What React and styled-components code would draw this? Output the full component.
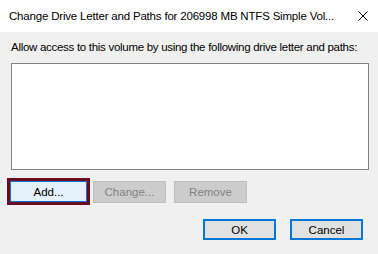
import React from 'react';
import styled, { createGlobalStyle } from 'styled-components';

const GlobalStyle = createGlobalStyle`
  html, body {
    margin: 0;
    padding: 0;
    background: #f0f0f0;
  }
  * {
    box-sizing: border-box;
  }
`;

const Window = styled.div`
  width: 378px;
  height: 254px;
  display: flex;
  flex-direction: column;
  background: #f0f0f0;
  font-family: 'Liberation Sans', Arial, sans-serif;
  font-size: 11.5px;
  color: #000;
  overflow: hidden;
`;

const TitleBar = styled.div`
  height: 32px;
  flex: none;
  display: flex;
  align-items: center;
  justify-content: space-between;
  padding: 0 10px 0 9px;
  background: #fff;
`;

const Title = styled.div`
  font-size: 11.5px;
  white-space: nowrap;
  letter-spacing: -0.19px;
`;

const CloseIcon = styled.svg`
  width: 10px;
  height: 10px;
  flex: none;
`;

const Body = styled.div`
  display: flex;
  flex-direction: column;
  padding: 0 9px 0 11px;
`;

const Label = styled.div`
  margin-top: 8px;
  line-height: 15px;
  white-space: nowrap;
  letter-spacing: -0.29px;
`;

const PathList = styled.div`
  margin-top: 8px;
  height: 107px;
  background: #fff;
  border: 1px solid #828282;
`;

const ButtonRow = styled.div`
  display: flex;
  gap: 6px;
  margin: 11px 0 0 -1px;
`;

const Button = styled.button`
  width: ${p => p.$w || 73}px;
  height: ${p => p.$h || 22}px;
  padding: 0;
  font-family: inherit;
  font-size: 11.5px;
  color: ${p => (p.disabled ? '#838383' : '#000')};
  background: ${p => (p.disabled ? '#cccccc' : '#e1e1e1')};
  border: 1px solid ${p => (p.disabled ? '#bfbfbf' : '#adadad')};
  margin-left: ${p => p.$ml || 0}px;
`;

const FocusButton = styled(Button)`
  background: #e5f1fb;
  border: 1px solid #0078d7;
  box-shadow: 0 0 0 3px #6e0b1f;
`;

const DefaultButton = styled(Button)`
  border: 2px solid #0078d7;
  background: #e1e1e1;
`;

const Footer = styled.div`
  display: flex;
  justify-content: flex-end;
  gap: 14px;
  margin: 16px 6px 0 0;
`;

export default function App() {
  return (
    <>
      <GlobalStyle />
      <Window>
        <TitleBar>
          <Title>Change Drive Letter and Paths for 206998 MB NTFS Simple Vol...</Title>
          <CloseIcon viewBox="0 0 10 10">
            <path d="M0.5 0.5 L9.5 9.5 M9.5 0.5 L0.5 9.5" stroke="#000" strokeWidth="1" fill="none" />
          </CloseIcon>
        </TitleBar>
        <Body>
          <Label>Allow access to this volume by using the following drive letter and paths:</Label>
          <PathList />
          <ButtonRow>
            <FocusButton $w={77} $h={21}>Add...</FocusButton>
            <Button disabled $w={73}>Change...</Button>
            <Button disabled $w={73} $ml={2}>Remove</Button>
          </ButtonRow>
          <Footer>
            <DefaultButton $w={73} $h={21}>OK</DefaultButton>
            <DefaultButton $w={73} $h={21}>Cancel</DefaultButton>
          </Footer>
        </Body>
      </Window>
    </>
  );
}
